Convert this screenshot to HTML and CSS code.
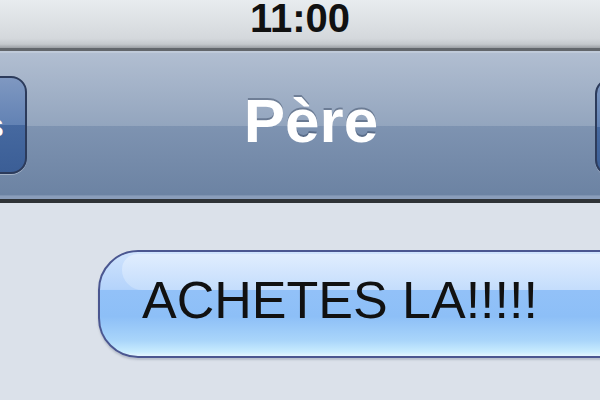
FILE: index.html
```html
<!DOCTYPE html>
<html>
<head>
	<title>Messages</title>
	<link rel="stylesheet" href="styles.css">
</head>
<body>
	<div class="phone">
		<div class="status-bar">
			<span class="time">11:00</span>
		</div>

		<div class="nav-bar">
			<button class="nav-btn back-btn">Messages</button>
			<h1>Père</h1>
			<button class="nav-btn edit-btn">Modifier</button>
		</div>

		<div class="thread">
			<div class="bubble">ACHETES LA!!!!!</div>
		</div>
	</div>
</body>
</html>
```

FILE: styles.css
```css
body {
	margin: 0;
	padding: 0;
	font-family: "Liberation Sans", Arial, sans-serif;
}

.phone {
	width: 600px;
	height: 400px;
	overflow: hidden;
	background-color: #dbe1ea;
}

.status-bar {
	height: 48px;
	display: flex;
	justify-content: center;
	background: linear-gradient(to bottom, #e8ecef 0%, #d4d8dc 80%, #c4c8cc 92%, #9a9ea3 100%);
	border-bottom: 3px solid #62666b;
}

.status-bar .time {
	font-size: 40px;
	font-weight: bold;
	line-height: 36px;
	color: #111;
}

.nav-bar {
	height: 146px;
	display: flex;
	align-items: center;
	justify-content: space-between;
	border-top: 2px solid #bfcad9;
	border-bottom: 4px solid #2f3337;
	background: linear-gradient(to bottom, #b1bed1 0%, #93a5be 50%, #7e93b1 50%, #6c83a3 97%, #8a9dba 98%, #8a9dba 100%);
}

.nav-bar h1 {
	margin: 0 0 10px;
	font-size: 62px;
	line-height: 62px;
	color: #fff;
	text-shadow: 0 -2px 0 rgba(40, 55, 80, 0.4);
}

.nav-btn {
	flex: none;
	width: 260px;
	height: 98px;
	border: 2px solid #2c3b5b;
	border-radius: 16px;
	background: linear-gradient(to bottom, #7f98c1 0%, #6282b4 50%, #4669a0 50%, #3b5e96 100%);
	box-shadow: 0 1px 0 rgba(255, 255, 255, 0.35);
	font-family: "Liberation Sans", Arial, sans-serif;
	font-size: 34px;
	font-weight: bold;
	color: #fff;
	padding: 0 21px;
}

.back-btn {
	margin-left: -233px;
	margin-top: -2px;
	text-align: right;
}

.edit-btn {
	margin-right: -255px;
	margin-top: 2px;
	text-align: left;
}

.thread {
	display: flex;
	padding: 47px 0 0 98px;
}

.bubble {
	position: relative;
	z-index: 0;
	flex: none;
	width: 560px;
	line-height: 96px;
	padding: 0 0 8px 42px;
	border: 2px solid #4a5690;
	border-radius: 40px;
	background: linear-gradient(to bottom, #cfe3fd 0%, #b4d3fb 36%, #92c1f8 37%, #8dbff7 62%, #a9d5fa 85%, #c8ecfe 96%, #e4f6ff 100%);
	box-shadow: 0 2px 2px rgba(80, 90, 110, 0.25);
	font-size: 52px;
	color: #111;
}

/* glossy highlight behind the text */
.bubble::before {
	content: "";
	position: absolute;
	z-index: -1;
	left: 22px;
	right: 12px;
	top: 2px;
	height: 36px;
	border-radius: 20px 20px 0 26px;
	background: linear-gradient(to bottom, #e0edfe 0%, #c4ddfc 100%);
}
```
